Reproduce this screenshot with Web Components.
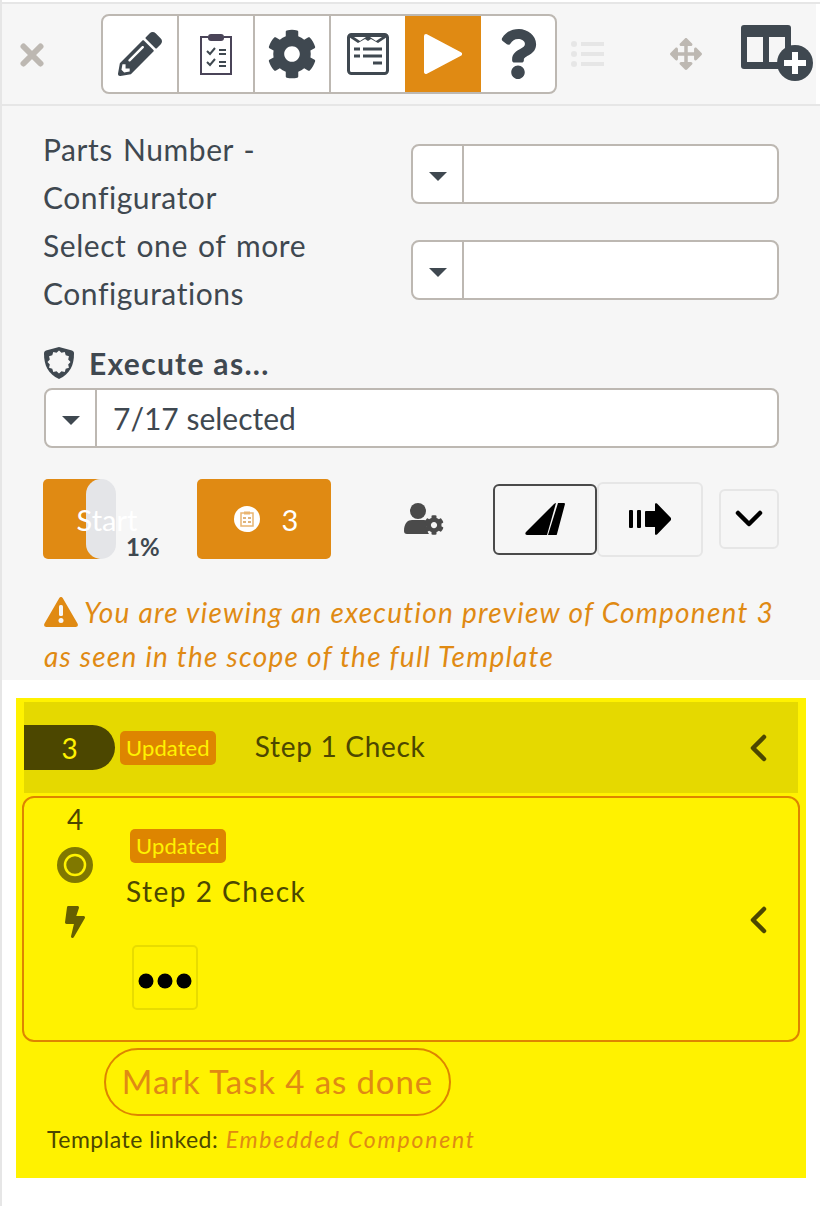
<!DOCTYPE html>
<html>
<head>
<meta charset="utf-8">
<title>Execution preview</title>
<style>
    html, body { margin: 0; padding: 0; background: #fff; }
    body { font-family: Lato, "Liberation Sans", sans-serif; color: #3f4850; }
</style>
</head>
<body>
<x-app></x-app>
<script>
// starburst for the shield icon
function burst(cx, cy, r1, r2, n) {
    const pts = [];
    for (let i = 0; i < n * 2; i++) {
        const r = i % 2 ? r2 : r1;
        const a = (Math.PI * i) / n;
        pts.push((cx + r * Math.sin(a)).toFixed(2) + "," + (cy - r * Math.cos(a)).toFixed(2));
    }
    return pts.join(" ");
}

const COG = "M487.4 315.7l-42.6-24.6c4.3-23.2 4.3-47 0-70.2l42.6-24.6c4.9-2.8 7.1-8.6 5.5-14-11.1-35.6-30-67.8-54.7-94.6-3.8-4.1-10-5.1-14.8-2.3L380.8 110c-17.9-15.4-38.5-27.3-60.8-35.1V25.8c0-5.6-3.9-10.5-9.4-11.7-36.7-8.2-74.3-7.8-109.2 0-5.5 1.2-9.4 6.1-9.4 11.7V75c-22.2 7.9-42.8 19.8-60.8 35.1L88.7 85.5c-4.9-2.8-11-1.9-14.8 2.3-24.7 26.7-43.6 58.9-54.7 94.6-1.7 5.4.6 11.2 5.5 14L67.3 221c-4.3 23.2-4.3 47 0 70.2l-42.6 24.6c-4.9 2.8-7.1 8.6-5.5 14 11.1 35.6 30 67.8 54.7 94.6 3.8 4.1 10 5.1 14.8 2.3l42.6-24.6c17.9 15.4 38.5 27.3 60.8 35.1v49.2c0 5.6 3.9 10.5 9.4 11.7 36.7 8.2 74.3 7.8 109.2 0 5.5-1.2 9.4-6.1 9.4-11.7v-49.2c22.2-7.9 42.8-19.8 60.8-35.1l42.6 24.6c4.9 2.8 11 1.9 14.8-2.3 24.7-26.7 43.6-58.9 54.7-94.6 1.5-5.5-.7-11.3-5.6-14.1zM256 336c-44.1 0-80-35.9-80-80s35.9-80 80-80 80 35.9 80 80-35.9 80-80 80z";

const ICONS = {
    pencil: '<svg viewBox="0 0 512 512" width="44" height="44"><path fill="#3f4850" d="M497.9 142.1l-46.1 46.1c-4.7 4.7-12.3 4.7-17 0l-111-111c-4.7-4.7-4.7-12.3 0-17l46.1-46.1c18.7-18.7 49.1-18.7 67.9 0l60.1 60.1c18.8 18.7 18.8 49.1 0 67.9zM284.2 99.8L21.6 362.4.4 483.9c-2.9 16.4 11.4 30.6 27.8 27.8l121.5-21.3 262.6-262.6c4.7-4.7 4.7-12.3 0-17l-111-111c-4.8-4.7-12.4-4.7-17.1 0zM124.1 339.9c-5.5-5.5-5.5-14.3 0-19.8l154-154c5.5-5.5 14.3-5.5 19.8 0s5.5 14.3 0 19.8l-154 154c-5.5 5.5-14.3 5.5-19.8 0zM88 424h48v36.3l-64.5 11.3-31.1-31.1L51.7 376H88v48z"/></svg>',
    clipboard: '<svg viewBox="0 0 34 42" width="34" height="42"><path fill="none" stroke="#4a4458" stroke-width="2" d="M9 4H2v37h30V4h-7"/><rect x="9" y="1" width="16" height="7" rx="3" fill="#4a4458"/><path fill="none" stroke="#3f4850" stroke-width="2" d="M8 18l3 3 5-6M8 29l3 3 5-6"/><path stroke="#3f4850" stroke-width="2" d="M20 17h7M20 21h7M20 29h7M20 33h7"/></svg>',
    cog: `<svg viewBox="0 0 512 512" width="50" height="50"><path fill="#3f4850" d="${COG}"/></svg>`,
    form: '<svg viewBox="0 0 42 42" width="42" height="42"><rect x="1.5" y="1.500" width="39" height="39" rx="3" fill="none" stroke="#3f4850" stroke-width="3"/><path fill="#3f4850" d="M2 2h38v2l-9 6-7-4-3 2-3-2-7 4-9-6z"/><path fill="#fff" d="M7 4h12l-6 4zM23 4h12l-6 4z"/><path stroke="#3f4850" stroke-width="3" d="M7 16h6M16 16h19M7 23h6M16 23h19M26 30h9"/></svg>',
    play: '<svg viewBox="0 0 38 42" width="38" height="42"><path fill="#fff" stroke="#fff" stroke-width="4" stroke-linejoin="round" d="M2 3l34 18L2 39z"/></svg>',
    question: '<svg viewBox="0 0 384 512" width="38" height="50"><path fill="#3f4850" d="M202.021 0C122.202 0 70.503 32.703 29.914 91.026c-7.363 10.58-5.093 25.086 5.178 32.874l43.138 32.709c10.373 7.865 25.132 6.026 33.253-4.148 25.049-31.381 43.63-49.449 82.757-49.449 30.764 0 68.816 19.799 68.816 49.631 0 22.552-18.617 34.134-48.993 51.164-35.423 19.86-82.299 44.576-82.299 106.405V320c0 13.255 10.745 24 24 24h72.471c13.255 0 24-10.745 24-24v-5.773c0-42.86 125.268-44.645 125.268-160.627C377.504 66.256 286.902 0 202.021 0zM192 373.459c-38.196 0-69.271 31.075-69.271 69.271 0 38.195 31.075 69.27 69.271 69.27s69.271-31.075 69.271-69.271-31.075-69.27-69.271-69.27z"/></svg>',
    close: '<svg viewBox="0 0 24 24" width="24" height="24"><path stroke="#bdb8b2" stroke-width="6" stroke-linecap="round" d="M3.500 3.500l17 17M20.500 3.500l-17 17"/></svg>',
    list: '<svg viewBox="0 0 34 26" width="34" height="26"><g fill="#e6e6e6"><circle cx="3" cy="3" r="3"/><circle cx="3" cy="13" r="3"/><circle cx="3" cy="23" r="3"/><rect x="10" y="1" width="23" height="4"/><rect x="10" y="11" width="23" height="4"/><rect x="10" y="21" width="23" height="4"/></g></svg>',
    move: '<svg viewBox="0 0 512 512" width="32" height="32"><path fill="#bdb8b2" d="M352.201 425.775l-79.196 79.196c-9.373 9.373-24.568 9.373-33.941 0l-79.196-79.196c-15.119-15.119-4.411-40.971 16.971-40.97h51.162L228 284H127.196v51.162c0 21.382-25.851 32.09-40.971 16.971L7.029 272.937c-9.373-9.373-9.373-24.569 0-33.941L86.225 159.8c15.119-15.119 40.971-4.411 40.971 16.971V228H228V127.196h-51.23c-21.382 0-32.09-25.851-16.971-40.971l79.196-79.196c9.373-9.373 24.568-9.373 33.941 0l79.196 79.196c15.119 15.119 4.411 40.971-16.971 40.971h-51.162V228h100.804v-51.162c0-21.382 25.851-32.09 40.97-16.971l79.196 79.196c9.373 9.373 9.373 24.569 0 33.941L425.773 352.2c-15.119 15.119-40.971 4.411-40.97-16.971V284H284v100.804h51.23c21.382 0 32.09 25.851 16.971 40.971z"/></svg>',
    addColumn: '<svg viewBox="0 0 72 56" width="72" height="56"><rect x="0" y="0" width="50" height="44" rx="3" fill="#3f4850"/><rect x="6" y="12" width="16" height="25" fill="#f6f6f6"/><rect x="28" y="12" width="16" height="25" fill="#f6f6f6"/><circle cx="54" cy="38" r="18" fill="#3f4850"/><path stroke="#fff" stroke-width="6" d="M54 27v22M43 38h22"/></svg>',
    caret: '<svg viewBox="0 0 18 10" width="18" height="10"><path fill="#3f4850" d="M0 1h18L9 10z"/></svg>',
    shield: `<svg viewBox="0 0 30 32" width="30" height="32"><path fill="#3f4850" d="M15 0l13 3.500c2 1 2 2 2 3.500 0 11-4 20-15 25C4 27 0 18 0 7c0-1.500 0-2.500 2-3.500z"/><polygon fill="#f6f6f6" points="${burst(15, 15, 11.5, 9.5, 12)}"/></svg>`,
    userCog: `<svg viewBox="0 0 40 32" width="40" height="32"><circle cx="14" cy="8" r="8" fill="#4a4a4a"/><path fill="#4a4a4a" d="M0 28c0-8 4-11 8-11h12c2 0 4 1 5 2-3 3-3 8 0 12H3c-2 0-3-1-3-3z"/><svg x="20" y="12" width="20" height="20" viewBox="0 0 512 512"><path fill="#4a4a4a" d="${COG}"/></svg></svg>`,
    slant: '<svg viewBox="0 0 40 32" width="40" height="32"><path fill="#000" d="M1 29L29 1c1-1 2-1 2-1L22 32H2c-2 0-2-2-1-3zM33 0h6c1 0 1 1 1 1L32 31c0 1-1 1-1 1h-8z"/></svg>',
    arrowBars: '<svg viewBox="0 0 42 32" width="42" height="32"><g fill="#000"><rect x="0" y="7" width="4" height="18" rx="1"/><rect x="8" y="7" width="4" height="18" rx="1"/><path d="M17 8h9V1c0-1 1-1 2-.5L42 15c.5.5.5 1.500 0 2L28 31.500c-1 .5-2 .5-2-.5v-7h-9c-.5 0-1-.5-1-1V9c0-.5.5-1 1-1z"/></g></svg>',
    chevronDown: '<svg viewBox="0 0 28 18" width="28" height="18"><path fill="none" stroke="#000" stroke-width="4.500" stroke-linecap="round" stroke-linejoin="round" d="M3 3l11 11L25 3"/></svg>',
    chevronLeft: '<svg viewBox="0 0 18 28" width="18" height="28"><path fill="none" stroke="#4c4700" stroke-width="4.500" stroke-linecap="round" stroke-linejoin="round" d="M15 3L4 14l11 11"/></svg>',
    warning: '<svg viewBox="0 0 34 30" width="34" height="30"><path fill="#e08a13" d="M15 1.500c1-2 3-2 4 0l14.500 25c1 2 0 3.500-2 3.500h-29c-2 0-3-1.500-2-3.500z"/><rect x="15" y="8" width="4" height="11" rx="1.500" fill="#f6f6f6"/><circle cx="17" cy="23.500" r="2.500" fill="#f6f6f6"/></svg>',
    task: '<svg viewBox="0 0 26 26" width="26" height="26"><circle cx="13" cy="13" r="13" fill="#fff"/><rect x="7" y="7" width="12" height="13" fill="none" stroke="#e9b571" stroke-width="1.500"/><rect x="10" y="5.500" width="6" height="3" fill="#e9b571"/><path stroke="#d39a50" stroke-width="1.300" d="M9 12h3M14 12h3M9 16h3M14 16h3"/></svg>',
    ring: '<svg viewBox="0 0 36 36" width="36" height="36"><circle cx="18" cy="18" r="18" fill="#807800"/><circle cx="18" cy="18" r="10" fill="none" stroke="#fff200" stroke-width="2.500"/></svg>',
    bolt: '<svg viewBox="0 0 320 512" width="20" height="32"><path fill="#665f00" d="M296 160H180.6l42.6-129.8C227.2 15 215.7 0 200 0H56C44 0 33.8 8.9 32.2 20.8l-32 240C-1.7 275.2 9.5 288 24 288h118.7L96.6 482.5c-3.6 15.2 8 29.500 23.3 29.500 8.400 0 16.400-4.400 20.800-12l176-304c9.300-15.900-2.200-36-20.700-36z"/></svg>',
    dots: '<svg viewBox="0 0 54 16" width="54" height="16"><circle cx="8" cy="8" r="7.500"/><circle cx="27" cy="8" r="7.500"/><circle cx="46" cy="8" r="7.500"/></svg>'
};

// shared helper, every element gets its own shadow
function shadow(el, html) {
    el.attachShadow({ mode: "open" }).innerHTML = html;
}

class Icon extends HTMLElement {
    connectedCallback() {
        if (this.shadowRoot) return;
        shadow(this, `<style>:host{display:inline-flex;line-height:0;}</style>${ICONS[this.getAttribute("name")] || ""}`);
    }
}
customElements.define("x-icon", Icon);

class Toolbar extends HTMLElement {
    constructor() {
        super();
        const tabs = ["pencil", "clipboard", "cog", "form", "play", "question"];
        shadow(this, `
<style>
    :host {
        display: block;
        border-top: 2px solid #e6e6e6;
        border-bottom: 2px solid #e6e6e6;
        margin-top: 2px;
    }
    .bar {
        display: flex;
        align-items: center;
        height: 100px;
        background: #f6f6f6;
        margin-right: 4px;
    }
    .close { width: 99px; padding-left: 18px; box-sizing: border-box; display: flex; padding-top: 2px; }
    .tabs {
        display: flex;
        height: 80px;
        box-sizing: border-box;
        border: 2px solid #bdb8b2;
        border-radius: 8px;
        background: #fff;
        overflow: hidden;
    }
    .tab {
        width: 74px;
        display: flex;
        align-items: center;
        justify-content: center;
        border-left: 2px solid #bdb8b2;
    }
    .tab:first-child { border-left: 0; width: 74px; }
    .tab.on { background: #e08a13; border-left: 0; width: 76px; }
    .tab.on + .tab { border-left: 0; }
    .list { margin-left: 14px; display: flex; }
    .move { margin-left: 65px; display: flex; }
    .add { margin-left: 39px; display: flex; margin-top: -2px; }
</style>
<div class="bar">
<div class="close"><x-icon name="close"></x-icon></div>
<div class="tabs">
    ${tabs.map((t) => `<div class="tab ${t === "play" ? "on" : ""}"><x-icon name="${t}"></x-icon></div>`).join("")}
</div>
<div class="list"><x-icon name="list"></x-icon></div>
<div class="move"><x-icon name="move"></x-icon></div>
<div class="add"><x-icon name="addColumn"></x-icon></div>
</div>
`);
    }
}
customElements.define("x-toolbar", Toolbar);

class Select extends HTMLElement {
    constructor() {
        super();
        shadow(this, `
<style>
    :host {
        display: flex;
        height: 60px;
        box-sizing: border-box;
        border: 2px solid #bdb8b2;
        border-radius: 8px;
        background: #fff;
        color: #3f4850;
        font-size: 30px;
    }
    .caret {
        width: 49px;
        flex: none;
        display: flex;
        align-items: center;
        justify-content: center;
        border-right: 2px solid #bdb8b2;
        padding-top: 4px;
        box-sizing: content-box;
    }
    .value { padding-left: 16px; display: flex; align-items: center; }
</style>
<div class="caret"><x-icon name="caret"></x-icon></div>
<div class="value"><slot></slot></div>
`);
    }
}
customElements.define("x-select", Select);

class Field extends HTMLElement {
    constructor() {
        super();
        shadow(this, `
<style>
    :host {
        display: grid;
        grid-template-columns: 367px 368px;
        align-items: center;
        font-size: 30px;
        line-height: 48px;
        color: #3f4850;
        letter-spacing: .55px;
        word-spacing: 2px;
    }
    .label { width: 300px; margin: -1px 0 1px -1px; }
</style>
<div class="label">${this.getAttribute("label")}</div>
<x-select></x-select>
`);
    }
}
customElements.define("x-field", Field);

class ActionBar extends HTMLElement {
    constructor() {
        super();
        shadow(this, `
<style>
    :host {
        display: flex;
        align-items: center;
        height: 80px;
        margin-left: -1px;
    }
    .btn {
        height: 80px;
        color: #fff;
        border-radius: 5px;
        display: flex;
        align-items: center;
        justify-content: center;
        font-size: 29px;
        box-sizing: border-box;
    }
    .start { width: 128px; position: relative; flex: none; }
    .fill {
        position: absolute;
        left: 0;
        top: 0;
        width: 60px;
        height: 80px;
        border-radius: 5px;
        background: #e08a13;
    }
    .pill {
        position: absolute;
        left: 43px;
        top: 0;
        width: 30px;
        height: 80px;
        border-radius: 15px;
        background: #e4e5e8;
    }
    .label { position: relative; }
    .pct {
        position: absolute;
        left: 83px;
        top: 52px;
        font-size: 24px;
        font-weight: 700;
        color: #3f4850;
        line-height: 32px;
    }
    .task { width: 134px; margin-left: 26px; gap: 22px; background: #e08a13; padding-left: 4px; }
    .user { margin-left: 73px; display: flex; }
    .group { margin-left: 49px; display: flex; align-items: center; }
    .g1 {
        width: 104px;
        height: 71px;
        box-sizing: border-box;
        border: 2px solid #4a4a4a;
        border-radius: 6px;
        display: flex;
        align-items: center;
        justify-content: center;
    }
    .g2 {
        width: 106px;
        height: 75px;
        box-sizing: border-box;
        border: 2px solid #e6e6e6;
        border-radius: 6px;
        display: flex;
        align-items: center;
        justify-content: center;
    }
    .more {
        margin-left: 16px;
        width: 60px;
        height: 60px;
        box-sizing: border-box;
        border: 2px solid #e6e6e6;
        border-radius: 6px;
        display: flex;
        align-items: center;
        justify-content: center;
    }
</style>
<div class="btn start"><div class="fill"></div><div class="pill"></div><span class="label">Start</span><div class="pct">1%</div></div>
<div class="btn task"><x-icon name="task"></x-icon><span>3</span></div>
<div class="user"><x-icon name="userCog"></x-icon></div>
<div class="group">
    <div class="g1"><x-icon name="slant"></x-icon></div>
    <div class="g2"><x-icon name="arrowBars"></x-icon></div>
</div>
<div class="more"><x-icon name="chevronDown"></x-icon></div>
`);
    }
}
customElements.define("x-action-bar", ActionBar);

class Panel extends HTMLElement {
    constructor() {
        super();
        shadow(this, `
<style>
    :host {
        display: block;
        background: #f6f6f6;
        padding: 20px 0 0 42px;
        height: 574px;
        box-sizing: border-box;
        margin-right: 2px;
    }
    .exec {
        margin-top: 21px;
        height: 48px;
        display: flex;
        align-items: center;
        gap: 15px;
        font-size: 30px;
        font-weight: 700;
        color: #3f4850;
        letter-spacing: 1.3px;
        margin-bottom: 1px;
    }
    x-select { width: 735px; margin-top: 0; }
    x-action-bar { margin-top: 31px; }
    .warn {
        margin-top: 31px;
        font-size: 28px;
        line-height: 44px;
        font-style: italic;
        color: #e08a13;
        width: 745px;
        letter-spacing: 1.25px;
    }
    .warn x-icon { vertical-align: -4px; margin-right: 6px; }
</style>
<x-field label="Parts Number - Configurator"></x-field>
<x-field label="Select one of more Configurations"></x-field>
<div class="exec"><x-icon name="shield"></x-icon><span>Execute as...</span></div>
<x-select>7/17 selected</x-select>
<x-action-bar></x-action-bar>
<div class="warn"><x-icon name="warning"></x-icon>You are viewing an execution preview of Component 3 as seen in the scope of the full Template</div>
`);
    }
}
customElements.define("x-panel", Panel);

class Badge extends HTMLElement {
    constructor() {
        super();
        shadow(this, `
<style>
    :host {
        display: inline-flex;
        align-items: center;
        justify-content: center;
        height: 34px;
        padding: 0 6px;
        border-radius: 5px;
        background: #de8500;
        color: #fff200;
        font-size: 22px;
        letter-spacing: .1px;
    }
</style>
<slot></slot>
`);
    }
}
customElements.define("x-badge", Badge);

class StepHeader extends HTMLElement {
    constructor() {
        super();
        shadow(this, `
<style>
    :host {
        display: flex;
        align-items: center;
        height: 91px;
        margin: 0 8px;
        background: #e5d900;
        color: #4c4700;
        font-size: 28px;
    }
    .num {
        width: 91px;
        height: 45px;
        border-radius: 0 23px 23px 0;
        background: #4c4700;
        color: #fff200;
        display: flex;
        align-items: center;
        justify-content: center;
        margin-right: 5px;
        flex: none;
    }
    .title { margin: 0 0 3px 39px; flex: 1; letter-spacing: .7px; }
    .chev { margin-right: 31px; display: flex; }
</style>
<div class="num">3</div>
<x-badge>Updated</x-badge>
<div class="title">Step 1 Check</div>
<div class="chev"><x-icon name="chevronLeft"></x-icon></div>
`);
    }
}
customElements.define("x-step-header", StepHeader);

class StepCard extends HTMLElement {
    constructor() {
        super();
        shadow(this, `
<style>
    :host {
        display: flex;
        height: 246px;
        box-sizing: border-box;
        margin: 3px 6px 0;
        border: 2px solid #de8500;
        border-radius: 12px;
        color: #4c4700;
        font-size: 28px;
    }
    .side {
        width: 102px;
        flex: none;
        display: flex;
        flex-direction: column;
        align-items: center;
        line-height: 36px;
        padding-top: 3px;
        box-sizing: border-box;
    }
    .side .ring { margin-top: 10px; display: flex; }
    .side .bolt { margin-top: 23px; display: flex; }
    .main { flex: 1; padding-top: 28px; box-sizing: border-box; }
    .main x-badge { margin-left: 4px; }
    .title { line-height: 36px; margin-top: 10px; letter-spacing: 1.5px; }
    .dots {
        margin: 36px 0 0 6px;
        width: 66px;
        height: 65px;
        box-sizing: border-box;
        border: 2px solid #e8dc00;
        border-radius: 5px;
        display: flex;
        align-items: center;
        justify-content: center;
        padding-top: 8px;
    }
    .chev { display: flex; align-self: center; margin-right: 31px; margin-top: 2px; }
</style>
<div class="side">
    <div>4</div>
    <div class="ring"><x-icon name="ring"></x-icon></div>
    <div class="bolt"><x-icon name="bolt"></x-icon></div>
</div>
<div class="main">
    <x-badge>Updated</x-badge>
    <div class="title">Step 2 Check</div>
    <div class="dots"><x-icon name="dots"></x-icon></div>
</div>
<div class="chev"><x-icon name="chevronLeft"></x-icon></div>
`);
    }
}
customElements.define("x-step-card", StepCard);

class StepList extends HTMLElement {
    constructor() {
        super();
        shadow(this, `
<style>
    :host {
        display: block;
        margin: 18px 0 0 14px;
        padding-top: 4px;
        box-sizing: border-box;
        width: 790px;
        height: 480px;
        background: #fff200;
    }
    .mark {
        display: inline-flex;
        align-items: center;
        justify-content: center;
        margin: 6px 0 0 88px;
        width: 347px;
        height: 68px;
        box-sizing: border-box;
        border: 2px solid #de8500;
        border-radius: 34px;
        color: #e08a13;
        font-size: 33px;
        letter-spacing: .9px;
        padding-bottom: 3px;
    }
    .linked {
        margin: 8px 0 0 31px;
        font-size: 23px;
        line-height: 30px;
        color: #4c4700;
        letter-spacing: .5px;
    }
    .linked em { color: #e08a13; letter-spacing: 1.8px; margin-left: 1px; }
</style>
<x-step-header></x-step-header>
<x-step-card></x-step-card>
<div class="mark">Mark Task 4 as done</div>
<div class="linked">Template linked: <em>Embedded Component</em></div>
`);
    }
}
customElements.define("x-step-list", StepList);

class App extends HTMLElement {
    constructor() {
        super();
        shadow(this, `
<style>
    :host {
        display: block;
        box-sizing: border-box;
        width: 822px;
        height: 1206px;
        overflow: hidden;
        border-left: 2px solid #e6e6e6;
        background: #fff;
    }
    x-toolbar { margin-right: 2px; }
</style>
<x-toolbar></x-toolbar>
<x-panel></x-panel>
<x-step-list></x-step-list>
`);
    }
}
customElements.define("x-app", App);
</script>
</body>
</html>
